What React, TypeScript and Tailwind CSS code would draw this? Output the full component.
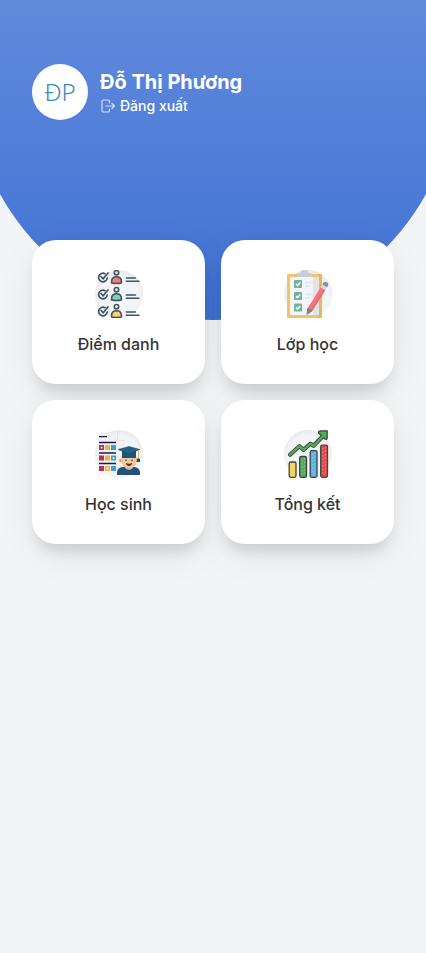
import React from "react";

function IconAttendance() {
    const rows = [
        { y: 0, color: "#f47b7b" },
        { y: 17, color: "#7fd1b9" },
        { y: 34, color: "#fbd36b" },
    ];

    return (
        <svg viewBox="0 0 48 48" className="w-12 h-12" fill="none" stroke="#40535f" strokeLinecap="round" strokeLinejoin="round" aria-hidden="true">
            {rows.map((row) => (
                <g key={row.y} transform={`translate(0 ${row.y})`}>
                    <path d="M10 3.7A4.3 4.3 0 1 0 12.2 8" strokeWidth="1.7" />
                    <path d="M6 6.5l2.2 2.3L13 3" strokeWidth="1.7" />
                    <circle cx="21.5" cy="2.7" r="2.2" strokeWidth="1.6" />
                    <path d="M16.6 13v-1.5c0-2.9 2-4.7 4.9-4.7s4.9 1.8 4.9 4.7V13q-4.900 1-9.800 0z" fill={row.color} strokeWidth="1.6" />
                    <path d="M31.300 8h9.200M31.300 11.200h12.700" strokeWidth="1.500" />
                </g>
            ))}
        </svg>
    );
}

function IconClass() {
    return (
        <svg viewBox="0 0 48 48" className="w-12 h-12" aria-hidden="true">
            <rect x="3" y="4" width="35" height="44" rx="1.5" fill="#f8c263" />
            <path d="M34 4h2.5A1.5 1.5 0 0 1 38 5.5v41a1.5 1.5 0 0 1-1.500 1.500H34z" fill="#e8b65b" />
            <rect x="6" y="7" width="29" height="38" fill="#f3f5f8" />
            <path d="M29 7h6v38h-6z" fill="#e1e3e6" />
            <path d="M13 7V4.5Q13 3 14.5 3H17V1.500Q17 0 18.500 0h4Q24 0 24 1.500V3h2.500Q28 3 28 4.500V7z" fill="#c3ced9" />
            {[10, 22, 33.5].map((y) => (
                <g key={y}>
                    <rect x="10" y={y} width="8" height="8" rx=".8" fill="#72b39a" />
                    <path d={`M12 ${y + 4}l1.6 1.6 2.6-3`} fill="none" stroke="#fff" strokeWidth="1.5" />
                </g>
            ))}
            <path d="M21 12.5h9M21 16h5.5M21 24.5h9M21 28h5.5" stroke="#d9e8f8" strokeWidth="1.3" />
            <g transform="translate(22.500 45) rotate(32)">
                <path d="M0 0l-2.700-5.500V-8h5.400v2.500z" fill="#788591" />
                <path d="M-2.700-31h5.400V-7h-5.400z" fill="#f5777b" />
                <path d="M.8-31h1.900V-7H.8z" fill="#ea6c72" />
                <path d="M-2.700-34.500h5.400v3.500h-5.400z" fill="#ccd9e2" />
                <path d="M-2.700-34.500v-1.500q0-2.500 2.700-2.500t2.700 2.500v1.500z" fill="#87919d" />
            </g>
        </svg>
    );
}

function IconStudent() {
    const colors = ["#c42c58", "#f2b43b", "#429fca"];

    return (
        <svg viewBox="0 0 48 48" className="w-12 h-12" aria-hidden="true">
            <path d="M3 3h19.5v7.5H30V44H3z" fill="#f1f1f3" />
            <path d="M22.5 3v7.5H30" fill="none" stroke="#dddee1" strokeWidth=".8" />
            <path d="M4 6.7h8M4 12.5h17M4 23h17M4 33.500h17" stroke="#15204b" strokeWidth="1.3" />
            {[15, 25.5, 36].map((y, row) =>
                colors.map((color, col) => (
                    <g key={`${y}-${col}`}>
                        <rect x={4 + col * 6} y={y} width="5" height="5" fill={color} />
                        {((row === 0 && col === 0) || (row === 1 && col === 2) || (row === 2 && col === 1)) && (
                            <rect x={5.7 + col * 6} y={y + 1.7} width="1.7" height="1.7" fill="#fff" />
                        )}
                    </g>
                ))
            )}
            <path d="M22 45v-2q0-5.500 6-6h11q6 .5 6 6v2z" fill="#205378" />
            <path d="M30 35h8v3q-4 4-8 0z" fill="#dba77c" />
            <circle cx="26" cy="30.5" r="2" fill="#dba77c" />
            <circle cx="42" cy="30.5" r="2" fill="#dba77c" />
            <path d="M26.500 26h15v5q0 7-7.500 7.500-7.500-.5-7.500-7.500z" fill="#f3c69b" />
            <circle cx="31" cy="30.3" r=".8" fill="#343d46" />
            <circle cx="37" cy="30.3" r=".8" fill="#343d46" />
            <path d="M31 33q3 1.500 6 0 0 2.700-3 2.900-3-.2-3-2.900z" fill="#363b43" />
            <path d="M27 20h14v8H27z" fill="#205378" />
            <path d="M23 19.500l11-3 11 3-11 4.500z" fill="#276189" stroke="#1b486b" strokeWidth=".5" />
            <path d="M43.500 20v9" stroke="#e8b765" />
            <path d="M41.800 29q1.600-1.500 3.200 0v3h-3.200z" fill="#205378" />
        </svg>
    );
}

function IconSummary() {
    const bars = [
        { x: 5.2, y: 32, color: "#f3d355" },
        { x: 15.7, y: 26.5, color: "#50ae52" },
        { x: 26.2, y: 20.7, color: "#57b5e7" },
        { x: 36.7, y: 15.2, color: "#e04c4a" },
    ];
    const line = "M6 24.700L15.300 16.200l4.400 3.600 6.600-6 3.200 2L40 5";

    return (
        <svg viewBox="0 0 48 48" className="w-12 h-12" stroke="#3e4443" strokeWidth="1.3" strokeLinejoin="round" strokeLinecap="round" aria-hidden="true">
            {bars.map((bar) => (
                <g key={bar.x}>
                    <rect x={bar.x} y={bar.y} width="6.8" height={47.3 - bar.y} rx="1.5" fill={bar.color} />
                    <path d={`M${bar.x + 2.2} ${bar.y + 3}V45M${bar.x + 4.7} ${bar.y + 2}V45`} stroke="#fff" strokeWidth=".6" strokeDasharray="1 2.5" opacity=".45" />
                </g>
            ))}
            <path d={line} fill="none" strokeWidth="4.2" />
            <path d="M34.500 2.500Q34.500.8 36.500.8h6.700v7.500q-.7 1.700-2.200.7l-5.500-5.200q-1-.3-1-1.300z" fill="#50ae52" />
            <path d={line} fill="none" stroke="#50ae52" strokeWidth="2.4" />
        </svg>
    );
}

const menu = [
    { label: "Điểm danh", icon: <IconAttendance /> },
    { label: "Lớp học", icon: <IconClass /> },
    { label: "Học sinh", icon: <IconStudent /> },
    { label: "Tổng kết", icon: <IconSummary /> },
];

export default function App() {
    return (
        <div className="relative min-h-screen overflow-hidden bg-gray-100 font-['Inter','Noto_Sans',sans-serif]">
            <div className="absolute top-0 inset-x-[-7%] h-80 rounded-b-full bg-linear-to-b from-[#608adc] to-[#4070d4]"></div>
            <header className="relative flex items-center gap-3 px-8 pt-16">
                <div className="flex items-center justify-center w-14 h-14 rounded-full bg-white text-[#3c8bb9] text-2xl font-light font-['Noto_Sans',sans-serif]">
                    ĐP
                </div>
                <div className="text-white">
                    <h1 className="text-xl leading-7 font-bold">Đỗ Thị Phương</h1>
                    <button type="button" className="flex items-center gap-1 text-sm font-medium">
                        <svg viewBox="0 0 16 16" className="w-4 h-4 opacity-75" fill="none" stroke="currentColor" strokeWidth="1.2" strokeLinecap="round" strokeLinejoin="round" aria-hidden="true">
                            <path d="M9.500 5V3.500A1.500 1.500 0 0 0 8 2H3.500A1.500 1.500 0 0 0 2 3.500v9A1.500 1.500 0 0 0 3.500 14H8a1.500 1.500 0 0 0 1.500-1.500V11" />
                            <path d="M6 8h8.500M12 5.500L14.500 8 12 10.500" />
                        </svg>
                        Đăng xuất
                    </button>
                </div>
            </header>
            <main className="relative grid grid-cols-2 gap-4 px-8 pt-30 pb-8">
                {menu.map((item) => (
                    <a
                        key={item.label}
                        href="#"
                        className="flex flex-col items-center gap-3.5 h-36 pt-7.5 rounded-3xl bg-white text-[#333] font-medium shadow-[0_10px_40px_rgba(0,0,0,0.06),0_12px_16px_-6px_rgba(0,0,0,0.15)]"
                    >
                        <span className="rounded-full bg-gray-100 shadow-[inset_0_2px_4px_rgba(0,0,0,0.06)]">{item.icon}</span>
                        <span>{item.label}</span>
                    </a>
                ))}
            </main>
        </div>
    );
}
